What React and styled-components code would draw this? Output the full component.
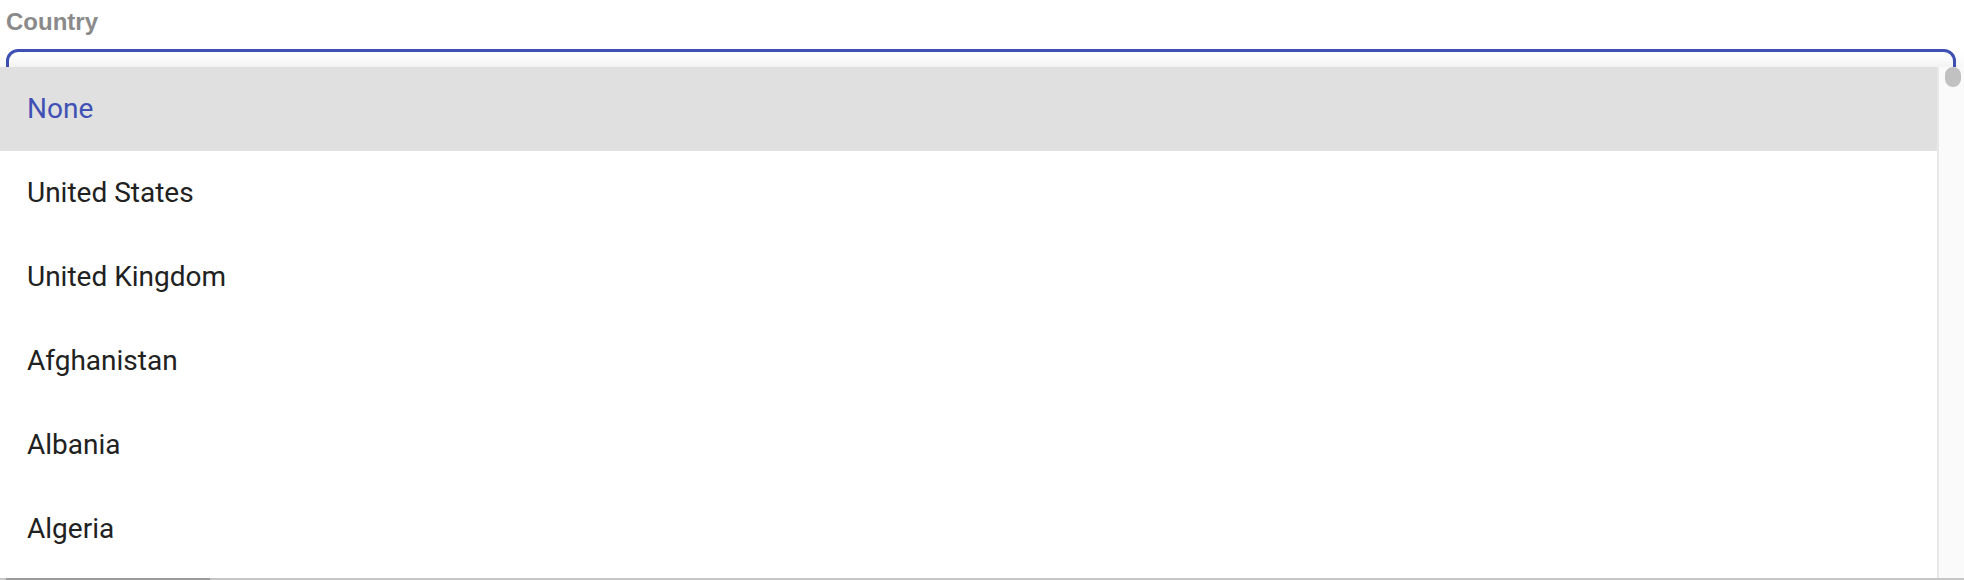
import React from 'react'
import styled, { createGlobalStyle } from 'styled-components'

const countries = ['United States', 'United Kingdom', 'Afghanistan', 'Albania', 'Algeria']

const GlobalStyle = createGlobalStyle`
    html, body {
        margin: 0;
        padding: 0;
        height: 580px;
        overflow: hidden;
        background: #ffffff;
    }
    * {
        box-sizing: border-box;
    }
`

function App() {
    return (
        <Page>
            <GlobalStyle />
            <Label>Country</Label>
            <SelectBox />

            <Menu>
                <MenuBody>
                    <List>
                        <Option selected>None</Option>
                        {countries.map(name => (
                            <Option key={name}>{name}</Option>
                        ))}
                    </List>
                    <Track>
                        <Thumb />
                    </Track>
                </MenuBody>
                <BottomBar />
            </Menu>
        </Page>
    )
}

const Page = styled.div`
    position: relative;
    height: 580px;
    padding: 10px 8px 0 6px;
`

const Label = styled.div`
    font-family: "Liberation Sans", Arial, sans-serif;
    font-weight: bold;
    font-size: 24px;
    line-height: 24px;
    color: #8a8a8a;
`

const SelectBox = styled.div`
    margin-top: 15px;
    height: 60px;
    border: 3px solid #3f51b5;
    border-radius: 12px;
    background: #ffffff;
`

const Menu = styled.div`
    position: absolute;
    top: 67px;
    left: 0;
    right: 0;
    bottom: 0;
    display: flex;
    flex-direction: column;
    background: #ffffff;
    box-shadow: 0 -4px 14px rgba(0, 0, 0, 0.07);
`

const MenuBody = styled.div`
    flex: 1;
    display: flex;
    flex-direction: row;
    overflow: hidden;
`

const List = styled.ul`
    flex: 1;
    margin: 0;
    padding: 0;
    list-style: none;
`

const Option = styled.li`
    height: 84px;
    display: flex;
    align-items: center;
    padding: 0 0 2px 27px;
    font-family: Roboto, "Liberation Sans", sans-serif;
    font-size: 28px;
    color: ${props => props.selected ? '#3f51b5' : '#212121'};
    background-color: ${props => props.selected ? '#e0e0e0' : '#ffffff'};
`

const Track = styled.div`
    width: 27px;
    border-left: 2px solid #e8e8e8;
    background: #fafafa;
    padding-left: 6px;
`

const Thumb = styled.div`
    width: 16px;
    height: 20px;
    border-radius: 8px;
    background: #c1c1c1;
`

const BottomBar = styled.div`
    height: 2px;
    background: linear-gradient(to right, #c8c8c8 0 6px, #9a9a9a 6px 210px, #c6c6c6 210px);
`

export default App
